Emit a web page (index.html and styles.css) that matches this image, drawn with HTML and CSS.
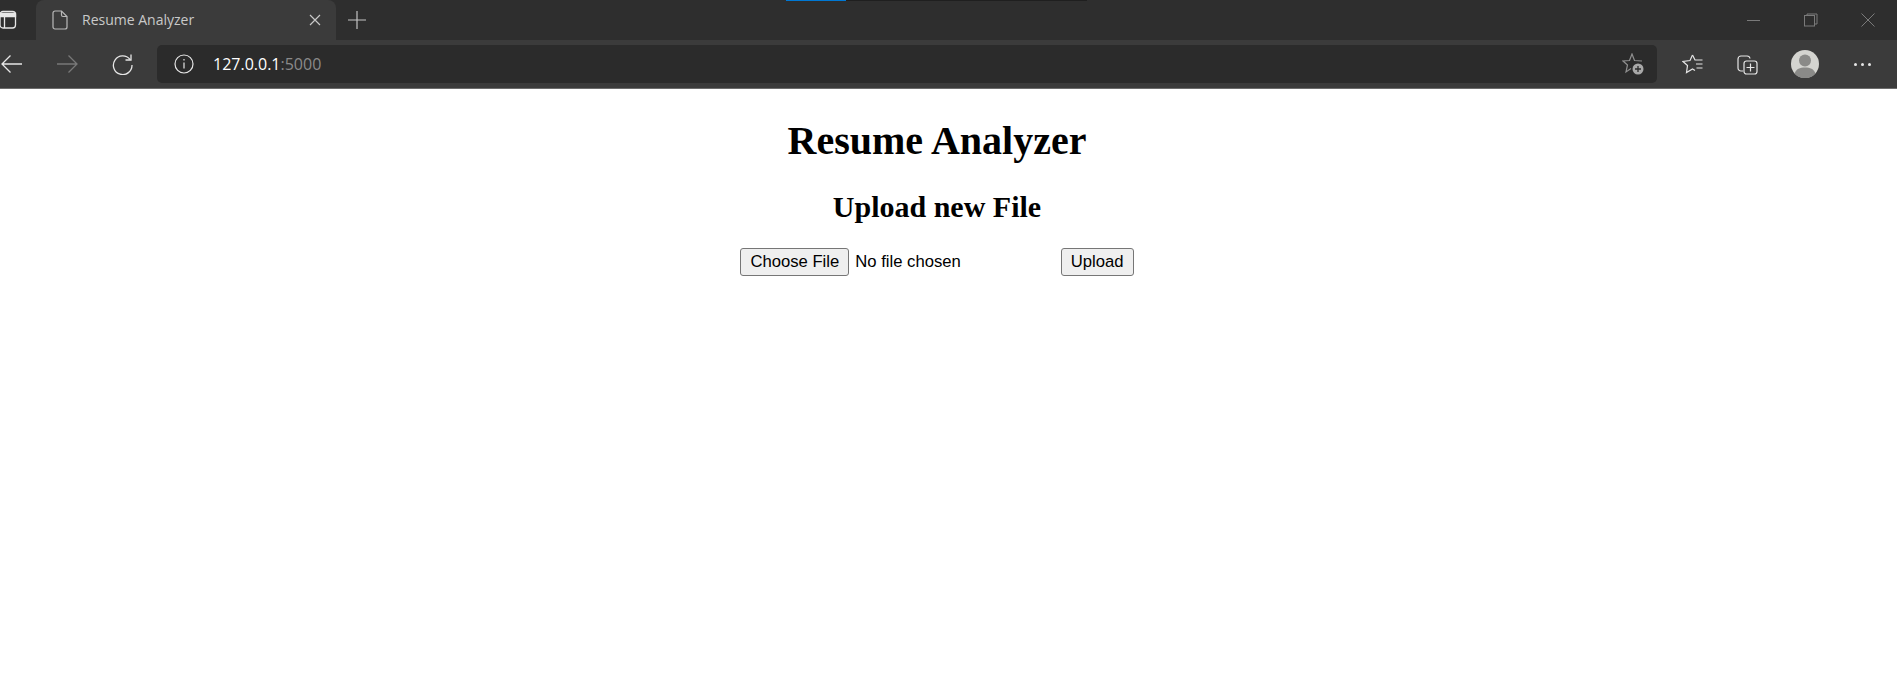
FILE: index.html
```html
<!DOCTYPE html>
<html lang="en">
<head>
    <meta charset="UTF-8">
    <meta name="viewport" content="width=device-width, initial-scale=1.0">
    <title>Resume Analyzer</title>
    <link rel="stylesheet" href="styles.css">
</head>
<body>
    <header class="browser">
        <div class="progress">
            <span class="progress-done"></span>
            <span class="progress-rest"></span>
        </div>
        <div class="tab-strip">
            <svg class="tab-actions" width="18" height="20" viewBox="0 0 18 20" fill="none" stroke="#e6e6e6" stroke-width="1.3">
                <rect x="1" y="1.500" width="15.500" height="16.500" rx="3"/>
                <path d="M5.500 6.500V18"/>
                <path d="M1 3.500h15.500v3H1z" fill="#e6e6e6"/>
            </svg>
            <div class="tab">
                <svg class="tab-icon" width="16" height="20" viewBox="0 0 16 20" fill="none" stroke="#b9b9b9" stroke-width="1.2">
                    <path d="M3 1h6.500L15 6.500V17a2 2 0 0 1-2 2H3a2 2 0 0 1-2-2V3a2 2 0 0 1 2-2z"/>
                    <path d="M9.500 1v4a1.500 1.500 0 0 0 1.500 1.500h4"/>
                </svg>
                <span class="tab-title">Resume Analyzer</span>
                <svg class="tab-close" width="12" height="12" viewBox="0 0 12 12" stroke="#c8c8c8" stroke-width="1.2">
                    <path d="M1 1l10 10M11 1L1 11"/>
                </svg>
            </div>
            <svg class="new-tab" width="18" height="18" viewBox="0 0 18 18" stroke="#c4c4c4" stroke-width="1.2">
                <path d="M9 0v18M0 9h18"/>
            </svg>
            <div class="window-controls">
                <svg width="14" height="14" viewBox="0 0 14 14" stroke="#7a7a7a" stroke-width="1"><path d="M0 7.500h13"/></svg>
                <svg width="14" height="14" viewBox="0 0 14 14" fill="none" stroke="#7a7a7a" stroke-width="1">
                    <rect x="0.5" y="2.500" width="10" height="10.500"/>
                    <path d="M3 2.500V1h10v10h-2.500"/>
                </svg>
                <svg width="14" height="14" viewBox="0 0 14 14" stroke="#7a7a7a" stroke-width="1"><path d="M0.500 0.500l13 13M13.500 0.500l-13 13"/></svg>
            </div>
        </div>
        <div class="toolbar">
            <svg class="nav-back" width="21" height="18" viewBox="0 0 21 18" fill="none" stroke="#e6e6e6" stroke-width="1.3">
                <path d="M1 9h20M9.500 0.500L1 9l8.500 8.500"/>
            </svg>
            <svg class="nav-forward" width="21" height="18" viewBox="0 0 21 18" fill="none" stroke="#787878" stroke-width="1.3">
                <path d="M0 9h20M11.500 0.500L20 9l-8.500 8.500"/>
            </svg>
            <svg class="nav-reload" width="21" height="21" viewBox="0 0 21 21" fill="none" stroke="#e6e6e6" stroke-width="1.3">
                <path d="M18 5.500A9.300 9.300 0 1 0 20 11"/>
                <path d="M19 0.500V6h-5.500"/>
            </svg>
            <div class="address-bar">
                <svg class="info-icon" width="20" height="20" viewBox="0 0 20 20" fill="none" stroke="#e6e6e6" stroke-width="1.2">
                    <circle cx="10" cy="10" r="9"/>
                    <path d="M10 8.500v6M10 5v1.600"/>
                </svg>
                <span class="url"><span class="url-host">127.0.0.1</span>:5000</span>
                <svg class="fav-add" width="22" height="22" viewBox="0 0 22 22">
                    <path d="M9 15.500l-5 3.500 1.500-7L1 8l6.500-.5L10 1l2.500 6.500L20 8" fill="none" stroke="#8f8f8f" stroke-width="1.2"/>
                    <circle cx="16" cy="16" r="5.500" fill="#a8a8a8"/>
                    <path d="M16 13v6M13 16h6" stroke="#2b2b2b" stroke-width="1.3"/>
                </svg>
            </div>
            <svg class="tool-favorites" width="22" height="20" viewBox="0 0 22 20" fill="none" stroke="#e6e6e6" stroke-width="1.2">
                <path d="M10.500 1L8 6.500 1 7.500l4.500 4-1 7 6-3.500 2.500 1.500"/>
                <path d="M10.500 1L13 6h7.500M14 10h6.500M14.500 14h6"/>
            </svg>
            <svg class="tool-collections" width="21" height="21" viewBox="0 0 21 21" fill="none" stroke="#e6e6e6" stroke-width="1.2">
                <path d="M6 17H4a3 3 0 0 1-3-3V5a3 3 0 0 1 3-3h6a3 3 0 0 1 3 2.500"/>
                <rect x="7" y="7" width="13" height="13" rx="2.500"/>
                <path d="M13.500 9.500v8M9.500 13.500h8"/>
            </svg>
            <svg class="tool-profile" width="28" height="28" viewBox="0 0 28 28">
                <circle cx="14" cy="14" r="14" fill="#d4d4d0"/>
                <circle cx="14" cy="10.500" r="6" fill="#8a8a88"/>
                <path d="M3.500 23.500C5 19 9 17.500 14 17.500S23 19 24.500 23.500A14 14 0 0 1 3.500 23.500z" fill="#8a8a88"/>
            </svg>
            <div class="tool-more"><span></span><span></span><span></span></div>
        </div>
    </header>
    <main class="page">
        <h1>Resume Analyzer</h1>
        <h2>Upload new File</h2>
        <form class="upload-form">
            <input type="file" name="file">
            <input type="submit" value="Upload">
        </form>
    </main>
</body>
</html>
```

FILE: styles.css
```css
html, body {
    margin: 0;
    padding: 0;
    background-color: #fff;
    overflow: hidden;
}

body {
    height: 693px;
    font-family: "Liberation Serif", serif;
    color: #000;
}

.browser {
    position: relative;
    height: 88px;
    background-color: #3b3b3b;
    border-bottom: 1px solid #6c6c6c;
    font-family: "Open Sans", "Liberation Sans", sans-serif;
}

.progress {
    position: absolute;
    top: 0;
    left: 786px;
    display: flex;
    height: 1px;
}

.progress-done {
    width: 60px;
    background-color: #0078d4;
}

.progress-rest {
    width: 241px;
    background-color: #1f1f1f;
}

.tab-strip {
    display: flex;
    align-items: center;
    height: 40px;
    background-color: #2e2e2e;
}

.tab-actions {
    flex: none;
    margin-left: -1px;
    margin-right: 19px;
}

.tab {
    display: flex;
    align-items: center;
    flex: none;
    box-sizing: border-box;
    width: 300px;
    height: 40px;
    padding: 0 15px 1px 16px;
    background-color: #3b3b3b;
    border-radius: 8px 8px 0 0;
}

.tab-title {
    flex: 1;
    margin-left: 14px;
    font-size: 14px;
    color: #c9c9c9;
}

.new-tab {
    flex: none;
    margin-left: 12px;
}

.window-controls {
    display: flex;
    gap: 43px;
    margin-left: auto;
    margin-right: 22px;
}

.toolbar {
    display: flex;
    align-items: center;
    height: 48px;
}

.nav-back {
    flex: none;
    margin-left: 1px;
}

.nav-forward {
    flex: none;
    margin-left: 35px;
}

.nav-reload {
    flex: none;
    margin-left: 34px;
}

.address-bar {
    display: flex;
    align-items: center;
    flex: none;
    box-sizing: border-box;
    width: 1500px;
    height: 38px;
    margin-left: 24px;
    padding: 0 13px 0 17px;
    background-color: #2b2b2b;
    border-radius: 5px;
}

.url {
    flex: 1;
    margin-left: 19px;
    font-size: 16px;
    color: #8a8a8a;
}

.url-host {
    color: #fff;
}

.tool-favorites {
    flex: none;
    margin-left: 25px;
}

.tool-collections {
    flex: none;
    margin-left: 33px;
}

.tool-profile {
    flex: none;
    margin-left: 33px;
}

.tool-more {
    display: flex;
    gap: 4px;
    margin-left: 35px;
}

.tool-more span {
    width: 3px;
    height: 3px;
    border-radius: 50%;
    background-color: #e6e6e6;
}

.page {
    box-sizing: border-box;
    padding: 29px 23px 0 0;
    text-align: center;
}

.page h1 {
    margin: 0;
    font-size: 40px;
    line-height: 46px;
}

.page h2 {
    margin: 26px 0 0;
    font-size: 30px;
    line-height: 34px;
}

.upload-form {
    margin-top: 24px;
    font-family: "Liberation Sans", sans-serif;
}

.upload-form input {
    font-family: "Liberation Sans", sans-serif;
    font-size: 16.67px;
}

.upload-form input[type="file"] {
    width: 316px;
}

.upload-form input[type="file"]::file-selector-button {
    margin-right: 6px;
}

.upload-form input[type="file"]::file-selector-button,
.upload-form input[type="submit"] {
    box-sizing: border-box;
    height: 28px;
    padding: 1px 9px;
    background-color: #efefef;
    border: 1.25px solid #767676;
    border-radius: 3px;
}
```
